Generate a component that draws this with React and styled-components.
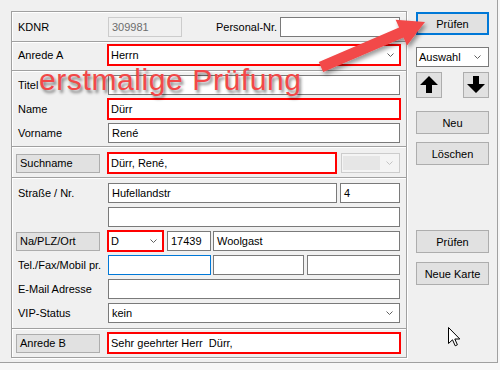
import React from 'react';
import styled, { createGlobalStyle } from 'styled-components';

const Global = createGlobalStyle`
  html, body { margin: 0; padding: 0; background: #f7f7f7; }
  body { font-family: "Liberation Sans", Arial, sans-serif; font-size: 11px; color: #000; }
  #root { width: 500px; height: 370px; overflow: hidden; }
`;

const Window = styled.div`
  position: relative;
  box-sizing: border-box;
  width: 498px;
  height: 363px;
  background: #f0f0f0;
  border-right: 1px solid #a0a0a0;
  border-bottom: 1px solid #a0a0a0;
  padding: 11px 0 0 11px;
  display: flex;
  align-items: flex-start;
  gap: 9px;
`;

const GroupBox = styled.div`
  box-sizing: border-box;
  width: 396px;
  border: 1px solid #a0a0a0;
  box-shadow: inset 1px 1px 0 #fff, 1px 1px 0 #fff;
  display: flex;
  flex-direction: column;
`;

const Section = styled.div`
  display: flex;
  flex-direction: column;
  gap: 4px;
  padding: ${p => p.$pt}px 6px ${p => p.$pb}px 6px;
`;

const Divider = styled.div`
  border-top: 1px solid #a0a0a0;
  border-bottom: 1px solid #fff;
`;

const Row = styled.div`
  display: flex;
  align-items: center;
  height: 20px;
`;

const Label = styled.span`
  flex: none;
  width: ${p => p.$w ?? 90}px;
  margin-left: ${p => p.$ml ?? 0}px;
  white-space: nowrap;
`;

const LabelButton = styled.div`
  box-sizing: border-box;
  flex: none;
  width: 84px;
  height: 19px;
  margin: 0 8px 0 -2px;
  padding-left: 3px;
  background: #e1e1e1;
  border: 1px solid #adadad;
  display: flex;
  align-items: center;
  white-space: nowrap;
`;

const borderFor = p =>
  p.$red ? '2px solid #ff0000'
  : p.$focus ? '1px solid #0078d7'
  : p.$disabled ? '1px solid #cccccc'
  : '1px solid #7a7a7a';

const Field = styled.div`
  box-sizing: border-box;
  height: ${p => (p.$red ? 22 : 20)}px;
  ${p => (p.$w ? `width: ${p.$w}px; flex: none;` : 'flex: 1; min-width: 0;')}
  margin: ${p => (p.$red ? '0 -1px' : '0')};
  margin-left: ${p => (p.$ml !== undefined ? `${p.$ml}px` : undefined)};
  border: ${borderFor};
  background: ${p => (p.$disabled ? '#f0f0f0' : '#fff')};
  color: ${p => (p.$disabled ? '#6d6d6d' : '#000')};
  padding: 0 ${p => (p.$red ? 5 : 6)}px 0 ${p => (p.$red ? 2 : 3)}px;
  display: flex;
  align-items: center;
  justify-content: space-between;
  white-space: pre;
  overflow: hidden;
`;

const DisabledCombo = styled.div`
  box-sizing: border-box;
  flex: none;
  width: 59px;
  height: 20px;
  margin-left: 5px;
  border: 1px solid #cccccc;
  background: #f4f4f4;
  padding: 0 6px 0 1px;
  display: flex;
  align-items: center;
  justify-content: space-between;
`;

const DisabledInner = styled.div`
  width: 37px;
  height: 14px;
  background: #e6e6e6;
`;

const Side = styled.div`
  width: 73px;
  display: flex;
  flex-direction: column;
`;

const Button = styled.div`
  box-sizing: border-box;
  height: 23px;
  margin-top: ${p => p.$mt}px;
  background: #e1e1e1;
  border: ${p => (p.$default ? '2px solid #0078d7' : '1px solid #adadad')};
  display: flex;
  align-items: center;
  justify-content: center;
  white-space: nowrap;
`;

const SideSelect = styled.div`
  box-sizing: border-box;
  height: 20px;
  margin-top: ${p => p.$mt}px;
  background: #fff;
  border: 1px solid #7a7a7a;
  padding: 0 7px 0 2px;
  display: flex;
  align-items: center;
  justify-content: space-between;
`;

const ArrowRow = styled.div`
  margin-top: 5px;
  display: flex;
  justify-content: space-between;
`;

const ArrowButton = styled.div`
  box-sizing: border-box;
  width: 26px;
  height: 26px;
  background: #e1e1e1;
  border: 1px solid #adadad;
  display: flex;
  align-items: center;
  justify-content: center;
`;

const Overlay = styled.svg`
  position: absolute;
  left: 0;
  top: 0;
  width: 500px;
  height: 370px;
  pointer-events: none;
  overflow: visible;
`;

const Stamp = styled.div`
  position: absolute;
  left: 39px;
  top: 65px;
  font-family: "Liberation Sans", Arial, sans-serif;
  font-size: 30px;
  line-height: 30px;
  letter-spacing: 0.6px;
  color: #f24848;
  text-shadow: 2px 3px 3px rgba(0, 0, 0, 0.45);
  white-space: nowrap;
  pointer-events: none;
`;

const Cursor = styled.svg`
  position: absolute;
  left: 448px;
  top: 327px;
`;

const Chevron = ({ color = '#606060' }) => (
  <svg width="7" height="4" viewBox="0 0 7 4">
    <polyline points="0.5,0.5 3.5,3.5 6.5,0.5" fill="none" stroke={color} strokeWidth="1" />
  </svg>
);

const UpArrow = () => (
  <svg width="18" height="18" viewBox="0 0 18 18">
    <polygon points="9,0 18,9 12,9 12,17 6,17 6,9 0,9" fill="#000" />
  </svg>
);

const DownArrow = () => (
  <svg width="18" height="18" viewBox="0 0 18 18">
    <polygon points="9,17 18,8 12,8 12,0 6,0 6,8 0,8" fill="#000" />
  </svg>
);

export default function App() {
  return (
    <>
      <Global />
      <Window>
        <GroupBox>
          <Section $pt={5} $pb={4}>
            <Row>
              <Label>KDNR</Label>
              <Field $disabled $w={74}>309981</Field>
              <Label $ml={34} $w={64}>Personal-Nr.</Label>
              <Field />
            </Row>
          </Section>
          <Divider />
          <Section $pt={2} $pb={5}>
            <Row>
              <Label>Anrede A</Label>
              <Field $red>Herrn<Chevron /></Field>
            </Row>
          </Section>
          <Divider />
          <Section $pt={3} $pb={3}>
            <Row>
              <Label>Titel</Label>
              <Field />
            </Row>
            <Row>
              <Label>Name</Label>
              <Field $red>Dürr</Field>
            </Row>
            <Row>
              <Label>Vorname</Label>
              <Field>René</Field>
            </Row>
          </Section>
          <Divider />
          <Section $pt={5} $pb={4}>
            <Row>
              <LabelButton>Suchname</LabelButton>
              <Field $red $w={230}>Dürr, René,</Field>
              <DisabledCombo>
                <DisabledInner />
                <Chevron color="#c4c4c4" />
              </DisabledCombo>
            </Row>
          </Section>
          <Divider />
          <Section $pt={4} $pb={5}>
            <Row>
              <Label>Straße / Nr.</Label>
              <Field $w={229}>Hufellandstr</Field>
              <Field $ml={3}>4</Field>
            </Row>
            <Row>
              <Label />
              <Field />
            </Row>
            <Row>
              <LabelButton>Na/PLZ/Ort</LabelButton>
              <Field $red $w={57}>D<Chevron /></Field>
              <Field $w={44} $ml={4}>17439</Field>
              <Field $ml={2}>Woolgast</Field>
            </Row>
            <Row>
              <Label>Tel./Fax/Mobil pr.</Label>
              <Field $focus $w={103} />
              <Field $w={91} $ml={2} />
              <Field $ml={3} />
            </Row>
            <Row>
              <Label>E-Mail Adresse</Label>
              <Field />
            </Row>
            <Row>
              <Label>VIP-Status</Label>
              <Field>kein<Chevron /></Field>
            </Row>
          </Section>
          <Divider />
          <Section $pt={3} $pb={4}>
            <Row>
              <LabelButton>Anrede B</LabelButton>
              <Field $red>Sehr geehrter Herr  Dürr,</Field>
            </Row>
          </Section>
        </GroupBox>

        <Side>
          <Button $default $mt={1}>Prüfen</Button>
          <SideSelect $mt={12}>Auswahl<Chevron /></SideSelect>
          <ArrowRow>
            <ArrowButton><UpArrow /></ArrowButton>
            <ArrowButton><DownArrow /></ArrowButton>
          </ArrowRow>
          <Button $mt={13}>Neu</Button>
          <Button $mt={8}>Löschen</Button>
          <Button $mt={65}>Prüfen</Button>
          <Button $mt={9}>Neue Karte</Button>
        </Side>

        <Stamp>erstmalige Prüfung</Stamp>

        <Overlay viewBox="0 0 500 370">
          <defs>
            <filter id="arrowShadow" x="-20%" y="-50%" width="140%" height="200%">
              <feDropShadow dx="2" dy="3" stdDeviation="2" floodColor="#000" floodOpacity="0.4" />
            </filter>
          </defs>
          <polygon
            points="318.8,62 399.1,27.6 395.6,19.8 425,22 407,45.4 403.5,37.6 323.2,72"
            fill="#f24848"
            filter="url(#arrowShadow)"
          />
        </Overlay>

        <Cursor width="13" height="20" viewBox="0 0 13 20">
          <path d="M0.5 0.5 L0.5 16.5 L4.5 12.8 L7.2 18.8 L9.4 17.8 L6.8 12 L11.8 12 Z" fill="#fff" stroke="#000" strokeWidth="1" strokeLinejoin="miter" />
        </Cursor>
      </Window>
    </>
  );
}
